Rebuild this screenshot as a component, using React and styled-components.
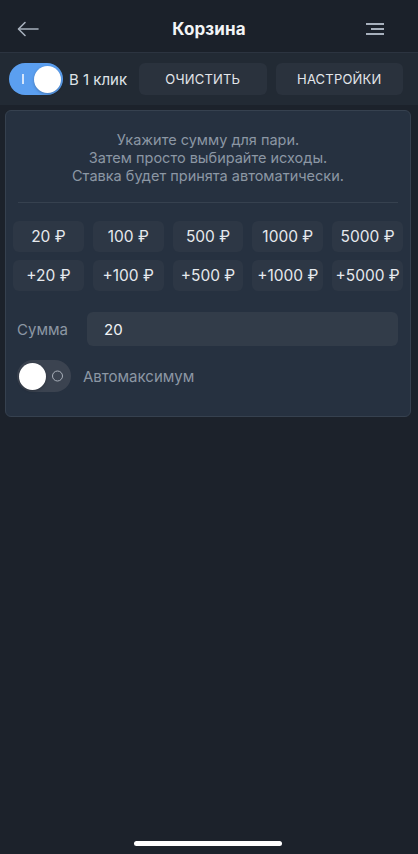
import React, { useState } from 'react'
import styled, { createGlobalStyle } from 'styled-components'

const GlobalStyle = createGlobalStyle`
    html, body {
        margin: 0;
        padding: 0;
        background: #1c222b;
    }
    body {
        font-family: Inter, "Noto Sans", sans-serif;
        -webkit-font-smoothing: antialiased;
    }
    * { box-sizing: border-box; }
`

const amounts = [20, 100, 500, 1000, 5000]

function App() {
    const [oneClick, setOneClick] = useState(true)
    const [autoMax, setAutoMax] = useState(false)
    const [sum, setSum] = useState('20')

    return (
        <Page>
            <GlobalStyle />
            <Header>
                <IconBtn pad="3px" aria-label="back">
                    <svg width="22" height="16" viewBox="0 0 22 16" fill="none" stroke="#a7b0bc" strokeWidth="1.6" strokeLinecap="round" strokeLinejoin="round">
                        <path d="M21 8H2" />
                        <path d="M8 1.5L1.5 8L8 14.5" />
                    </svg>
                </IconBtn>
                <Title>Корзина</Title>
                <IconBtn pad="1px" aria-label="menu">
                    <svg width="20" height="14" viewBox="0 0 20 14" fill="none" stroke="#a7b0bc" strokeWidth="2">
                        <path d="M1 2H19" />
                        <path d="M6 7H19" />
                        <path d="M1 12H19" />
                    </svg>
                </IconBtn>
            </Header>

            <Toolbar>
                <ToggleWrap>
                    <Toggle on={oneClick} onClick={() => setOneClick(!oneClick)}>
                        <Knob on={oneClick} />
                    </Toggle>
                    <ToggleLabel>В 1 клик</ToggleLabel>
                </ToggleWrap>
                <ToolButton onClick={() => setSum('')}>Очистить</ToolButton>
                <ToolButton>Настройки</ToolButton>
            </Toolbar>

            <Card>
                <Hint>
                    Укажите сумму для пари.<br />
                    Затем просто выбирайте исходы.<br />
                    Ставка будет принята автоматически.
                </Hint>
                <Divider />
                <AmountGrid>
                    {amounts.map(a => (
                        <AmountBtn key={a} onClick={() => setSum(String(a))}>{a} ₽</AmountBtn>
                    ))}
                    {amounts.map(a => (
                        <AmountBtn key={'p' + a} onClick={() => setSum(String((parseInt(sum) || 0) + a))}>+{a} ₽</AmountBtn>
                    ))}
                </AmountGrid>
                <SumRow>
                    <SumLabel>Сумма</SumLabel>
                    <SumInput value={sum} onChange={e => setSum(e.target.value)} />
                </SumRow>
                <AutoRow>
                    <Toggle on={autoMax} onClick={() => setAutoMax(!autoMax)}>
                        <Knob on={autoMax} />
                    </Toggle>
                    <AutoLabel>Автомаксимум</AutoLabel>
                </AutoRow>
            </Card>

            <HomeBar />
        </Page>
    )
}

const Page = styled.div`
    width: 418px;
    height: 854px;
    background: #1c222b;
    display: flex;
    flex-direction: column;
    position: relative;
`

const Header = styled.div`
    height: 53px;
    display: flex;
    align-items: center;
    justify-content: space-between;
    padding: 5px 14px 0 14px;
    background: #1b212a;
    border-bottom: 1px solid #2c3440;
`

const IconBtn = styled.button`
    width: 40px;
    background: none;
    border: none;
    padding: 4px 0 4px ${p => p.pad};
    display: flex;
    align-items: center;
    justify-content: flex-start;
    cursor: pointer;
`

const Title = styled.h1`
    margin: 0;
    font-size: 17px;
    font-weight: 700;
    color: #f2f4f6;
    letter-spacing: 0.1px;
`

const Toolbar = styled.div`
    height: 52px;
    display: flex;
    align-items: center;
    gap: 9px;
    padding: 0 15px 0 9px;
    background: #222a34;
`

const ToggleWrap = styled.div`
    display: flex;
    align-items: center;
    gap: 6px;
    width: 121px;
`

const Toggle = styled.div`
    position: relative;
    width: 54px;
    height: 32px;
    border-radius: 16px;
    background: ${p => p.on ? '#5b9ff0' : '#3b4350'};
    flex-shrink: 0;
    cursor: pointer;
    &::before{
        content: '';
        position: absolute;
        top: 50%;
        transform: translateY(-50%);
        ${p => p.on
            ? 'left: 13px; width: 1.5px; height: 10px; background: #d4e5fb;'
            : 'right: 8px; width: 9px; height: 9px; border: 1.5px solid #a9b0ba; border-radius: 50%;'}
    }
`

const Knob = styled.div`
    position: absolute;
    top: 3px;
    left: ${p => p.on ? '25px' : '2px'};
    width: 27px;
    height: 27px;
    border-radius: 50%;
    background: #ffffff;
    box-shadow: 0 1px 3px rgba(0,0,0,0.25);
`

const ToggleLabel = styled.span`
    font-size: 15px;
    color: #dfe3e8;
    white-space: nowrap;
`

const ToolButton = styled.button`
    flex: 1;
    height: 32px;
    border: none;
    border-radius: 6px;
    background: #2a323d;
    color: #e3e6ea;
    font-family: inherit;
    font-size: 13px;
    text-transform: uppercase;
    letter-spacing: 0.2px;
    cursor: pointer;
`

const Card = styled.div`
    margin: 5px 7px 0 5px;
    background: #263140;
    border: 1px solid #36414f;
    border-radius: 6px;
    padding: 20px 7px 24px 7px;
`

const Hint = styled.p`
    margin: 0;
    text-align: center;
    font-size: 14.5px;
    line-height: 18px;
    color: #8c97a4;
`

const Divider = styled.div`
    height: 1px;
    background: #36414f;
    margin: 17px 5px 18px;
`

const AmountGrid = styled.div`
    display: grid;
    grid-template-columns: repeat(5, 1fr);
    gap: 8px 9px;
`

const AmountBtn = styled.button`
    height: 31px;
    border: none;
    border-radius: 6px;
    background: #2d3745;
    color: #e6e9ed;
    font-family: inherit;
    font-size: 15.5px;
    padding: 0;
    cursor: pointer;
`

const SumRow = styled.div`
    display: flex;
    align-items: center;
    margin-top: 21px;
    padding: 0 5px 0 4px;
`

const SumLabel = styled.span`
    width: 70px;
    font-size: 15px;
    color: #8c97a4;
`

const SumInput = styled.input`
    flex: 1;
    height: 34px;
    border: none;
    border-radius: 6px;
    background: #323c49;
    color: #f1f3f5;
    font-family: inherit;
    font-size: 15px;
    padding: 0 17px;
    outline: none;
`

const AutoRow = styled.div`
    display: flex;
    align-items: center;
    gap: 12px;
    margin-top: 14px;
    padding-left: 4px;
`

const AutoLabel = styled.span`
    font-size: 15px;
    color: #8c97a4;
`

const HomeBar = styled.div`
    position: absolute;
    bottom: 8px;
    left: 134px;
    width: 148px;
    height: 5px;
    border-radius: 3px;
    background: #ffffff;
`

export default App
